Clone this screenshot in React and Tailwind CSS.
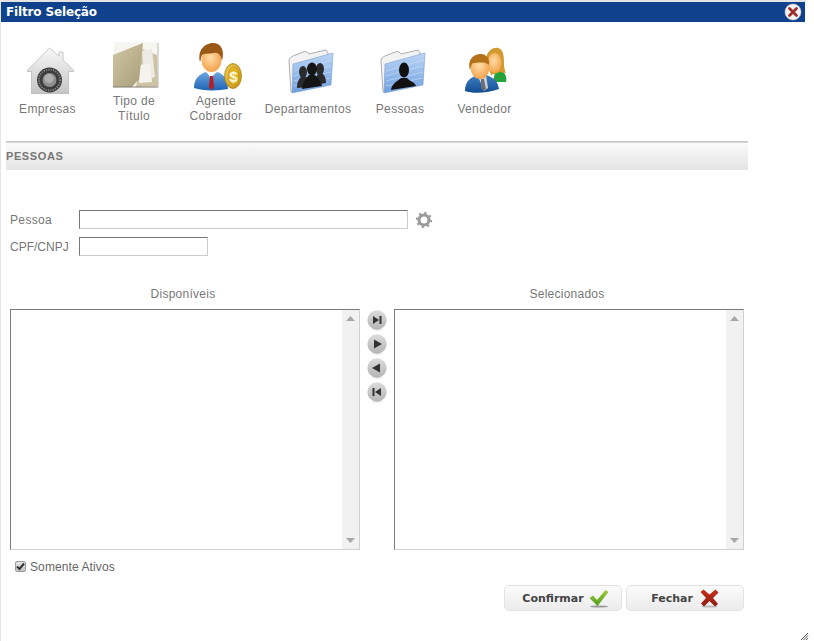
import React from "react";

function Defs() {
  return (
    <svg width="0" height="0" className="absolute">
      <defs>
        <linearGradient id="silver" x1="0" y1="0" x2="0" y2="1"><stop offset="0" stopColor="#f8f8f8" /><stop offset="1" stopColor="#c4c4c4" /></linearGradient>
        <linearGradient id="tan" x1="0" y1="0" x2="1" y2="1"><stop offset="0" stopColor="#d2c7a4" /><stop offset="1" stopColor="#a89d7b" /></linearGradient>
        <linearGradient id="blueF" x1="0" y1="0" x2="0" y2="1"><stop offset="0" stopColor="#bcd6f5" /><stop offset="1" stopColor="#6f9fe0" /></linearGradient>
        <linearGradient id="suit" x1="0" y1="0" x2="0" y2="1"><stop offset="0" stopColor="#6ea6de" /><stop offset="1" stopColor="#1d64b4" /></linearGradient>
        <linearGradient id="suit2" x1="0" y1="0" x2="0" y2="1"><stop offset="0" stopColor="#3f7fc0" /><stop offset="1" stopColor="#134d92" /></linearGradient>
        <radialGradient id="skin" cx="0.45" cy="0.4" r="0.7"><stop offset="0" stopColor="#ffdca8" /><stop offset="1" stopColor="#f09a3c" /></radialGradient>
        <radialGradient id="coin" cx="0.4" cy="0.4" r="0.7"><stop offset="0" stopColor="#fbe26a" /><stop offset="1" stopColor="#c08a0c" /></radialGradient>
        <linearGradient id="rb" x1="0" y1="0" x2="0" y2="1"><stop offset="0" stopColor="#dcdcdc" /><stop offset="1" stopColor="#b4b4b4" /></linearGradient>
        <linearGradient id="grn" x1="0" y1="0" x2="0" y2="1"><stop offset="0" stopColor="#a4cf3c" /><stop offset="1" stopColor="#4c9a1c" /></linearGradient>
        <linearGradient id="red" x1="0" y1="0" x2="0" y2="1"><stop offset="0" stopColor="#c8321e" /><stop offset="1" stopColor="#8e1a10" /></linearGradient>
      </defs>
    </svg>
  );
}

function Ico({ children }) {
  return <svg width="56" height="53" viewBox="0 0 56 53" className="block mx-auto">{children}</svg>;
}

function House() {
  return (
    <Ico>
      <path d="M29.5 7 L39 15 V11 H43 V19 L53.5 29 V30.5 H48.5 V53 H11.5 V30.5 H7.5 V29 Z" fill="url(#silver)" stroke="#b4b4b4" strokeWidth="0.7" />
      <circle cx="29.5" cy="39" r="12.5" fill="#3c3c3c" />
      <circle cx="29.5" cy="39" r="10.5" fill="none" stroke="#8a8a8a" strokeWidth="1.8" strokeDasharray="1.2 1.2" />
      <circle cx="29.5" cy="39" r="7" fill="#8e8e8e" />
      <circle cx="29" cy="37.5" r="4.5" fill="#b0b0b0" />
    </Ico>
  );
}

function TanFolder() {
  return (
    <Ico>
      <rect x="8" y="1" width="44" height="45" fill="#f7f5f0" />
      <path d="M36 8 L51 14 L52 45 L30 46 Z" fill="#cdc3a2" />
      <path d="M36 10 L46 8 L49 36 L38 40 Z" fill="#eceae4" />
      <path d="M34 24 L44 22 L46 41 L33 42 Z" fill="#f4f3ee" />
      <path d="M7 14 L37 2 L35 22 L33 38 L26 46 L7 46 Z" fill="url(#tan)" />
      <path d="M7 46 L52 46" stroke="#7e7868" strokeWidth="1" />
      <path d="M52 2 V46" stroke="#bbb" strokeWidth="1" />
    </Ico>
  );
}

function Agent() {
  return (
    <Ico>
      <path d="M6 47 C6 37 12 33 18 31 L23 36 L29 31 C35 33 40 37 40 48 C30 50 14 50 6 47Z" fill="url(#suit)" />
      <path d="M19 31 L23 35 L27 31 L26 33 L23 38 L20 33Z" fill="#fff" />
      <path d="M22 35 H25 L26 46 L23.5 49 L21 46Z" fill="#b81c24" />
      <ellipse cx="23.5" cy="19" rx="10" ry="12" fill="url(#skin)" />
      <path d="M12 21 C9 8 18 2 25 2 C33 2 37 9 34 20 C33 14 30 11 26 12 C21 13 16 12 14 14 C13 16 13 19 12 21Z" fill="#9a5a16" />
      <ellipse cx="45" cy="35" rx="8.5" ry="12.5" fill="url(#coin)" stroke="#a87c10" strokeWidth="0.7" />
      <ellipse cx="45.5" cy="35" rx="5.5" ry="9" fill="#e3b422" stroke="#b48a10" strokeWidth="0.6" />
      <text x="45.5" y="40.5" textAnchor="middle" fontSize="15" fontWeight="700" fill="#fff8e0" fontFamily="Liberation Sans, sans-serif">$</text>
    </Ico>
  );
}

function BlueFolder({ children }) {
  return (
    <Ico>
      <path d="M11 51 L9 20 C9 17 11 16 13 15 L23 11 C25 10 28 11 29 13 L46 9 L48 12 L48 20 L15 50Z" fill="#f3f3f3" stroke="#9a9a9a" strokeWidth="0.8" />
      <path d="M13 23 L53 12 L51 44 L12 52Z" fill="url(#blueF)" stroke="#7c9fd0" strokeWidth="0.6" />
      <path d="M14 30 L52 19 M14 35 L51 25 M14 40 L51 31 M14 45 L50 37" stroke="#d0e2f8" strokeWidth="0.8" opacity="0.7" />
      {children}
    </Ico>
  );
}

function Vendor() {
  return (
    <Ico>
      <path d="M38 31 L46 31 C49 33 50 38 49 41 H36Z" fill="#25a33a" />
      <path d="M29 20 C29 10 36 6 41 7 C47 8 47 17 47 23 C47 27 48 30 49 32 L43 31 L34 34Z" fill="#d49a32" />
      <ellipse cx="37.5" cy="22" rx="7" ry="10" fill="url(#skin)" />
      <path d="M8 50 C8 40 14 36 21 34 L24 36 L29 34 C36 36 41 40 42 48 C32 52 16 53 8 50Z" fill="url(#suit2)" />
      <path d="M20 34 L25 37 L29 34 L31 47 L27 50 L23 40Z" fill="#cfd3d8" />
      <path d="M24 38 H27 L29 48 L27 50 L24 47Z" fill="#6a7078" />
      <ellipse cx="23" cy="27" rx="9.5" ry="11" fill="url(#skin)" />
      <path d="M13 29 C10 18 17 13 24 13 C30 13 33 18 32 24 C28 20 20 22 16 22 C14 23 14 26 13 29Z" fill="#b5701a" />
    </Ico>
  );
}

function ToolItem({ w, children, icon }) {
  return (
    <div className={`${w} shrink-0`}>
      {icon}
      <div className="h-[30px] flex items-center justify-center text-center leading-[15px]">
        <span>{children}</span>
      </div>
    </div>
  );
}

function ScrollBar() {
  return (
    <div className="w-[17px] h-full bg-[#f1f1f1] flex flex-col justify-between items-center py-[6px]">
      <svg width="9" height="5"><path d="M0 5 L4.5 0 L9 5Z" fill="#a8a8a8" /></svg>
      <svg width="9" height="5"><path d="M0 0 L4.5 5 L9 0Z" fill="#a8a8a8" /></svg>
    </div>
  );
}

function ListBox({ title }) {
  return (
    <div className="w-[350px]">
      <div className="h-[30px] flex items-center justify-center tracking-[0.25px] pr-[4px]">{title}</div>
      <div className="h-[241px] border-t border-l border-[#7a7a7a] border-r-[1px] border-r-[#d0d0d0] border-b border-b-[#d0d0d0] bg-white flex justify-end">
        <ScrollBar />
      </div>
    </div>
  );
}

function RoundBtn({ d }) {
  return (
    <svg width="20" height="21" viewBox="0 0 20 21" className="block">
      <ellipse cx="10" cy="19.5" rx="6" ry="1.5" fill="#eee" />
      <circle cx="10" cy="10" r="9.7" fill="url(#rb)" />
      <path d={d} fill="#333" />
    </svg>
  );
}

function ActionBtn({ label, children, cls }) {
  return (
    <div className={`w-[118px] h-[26px] rounded-[5px] border border-[#e2e2e2] bg-gradient-to-b from-[#fbfbfb] to-[#ececec] flex items-center justify-center ${cls} font-bold text-[#444] text-[11px] tracking-normal [font-family:'DejaVu_Sans',sans-serif]`}>
      <span className="mt-[3px]">{label}</span>
      {children}
    </div>
  );
}

export default function App() {
  return (
    <div className="relative w-[814px] h-[641px] bg-white overflow-hidden text-[12px] tracking-[0.35px] text-[#777] [font-family:'Liberation_Sans',Arial,sans-serif]">
      <Defs />
      <div className="w-[806px] h-[641px] border-l border-l-[#e4e4e4] border-t-2 border-t-[#e4e4e4]">
        <div className="w-[804px] h-[20px] bg-[#10418c] flex items-center justify-between pl-[5px] pr-[3px]">
          <span className="text-white font-bold text-[12px] tracking-[-0.15px] [font-family:'DejaVu_Sans',sans-serif]">Filtro Seleção</span>
          <svg width="18" height="18" viewBox="0 0 18 18">
            <circle cx="9" cy="9" r="8" fill="#f4f2f2" stroke="#c8c8d8" strokeWidth="0.6" />
            <path d="M5.5 5.5 L12.5 12.5 M12.5 5.5 L5.5 12.5" stroke="#a02c2c" strokeWidth="2.8" strokeLinecap="round" />
          </svg>
        </div>

        <div className="ml-[5px] w-[742px]">
          <div className="flex pt-[19px] h-[119px]">
            <ToolItem w="w-[83px]" icon={<House />}>Empresas</ToolItem>
            <ToolItem w="w-[90px]" icon={<TanFolder />}>Tipo de<br />Título</ToolItem>
            <ToolItem w="w-[74px]" icon={<Agent />}>Agente<br />Cobrador</ToolItem>
            <ToolItem w="w-[110px]" icon={
              <BlueFolder>
                <ellipse cx="23" cy="31" rx="4" ry="6" fill="#2a2a2a" /><path d="M17 47 C17 41 19 38 21 36 H26 C28 38 29 40 29 46Z" fill="#2a2a2a" />
                <ellipse cx="40" cy="28" rx="4" ry="6" fill="#2a2a2a" /><path d="M35 44 C35 38 36 35 38 33 H43 C45 35 46 38 46 42Z" fill="#2a2a2a" />
                <ellipse cx="32" cy="28" rx="5" ry="6.5" fill="#151515" /><path d="M22 48 C23 40 26 37 29 34 H35 C38 37 41 40 42 45Z" fill="#151515" />
              </BlueFolder>
            }>Departamentos</ToolItem>
            <ToolItem w="w-[74px]" icon={
              <BlueFolder>
                <ellipse cx="32" cy="29" rx="5" ry="7.5" fill="#111" />
                <path d="M19 49 C20 42 26 40 29 37 H35 C37 40 43 41 44 45Z" fill="#111" />
              </BlueFolder>
            }>Pessoas</ToolItem>
            <ToolItem w="w-[95px]" icon={<Vendor />}>Vendedor</ToolItem>
          </div>

          <div className="h-[2px] bg-gradient-to-b from-[#c4c4c4] to-[#d8d8d8]" />
          <div className="h-[27px] bg-gradient-to-b from-[#fafafa] to-[#e4e4e4] flex items-center font-bold text-[#777] text-[11px] tracking-[0.6px]">PESSOAS</div>

          <div className="mt-[40px] pl-[4px]">
            <div className="flex items-center h-[19px]">
              <span className="w-[69px]">Pessoa</span>
              <div className="w-[329px] h-[19px] border border-[#ccc] border-t-[#777] border-l-[#777]" />
              <svg width="18" height="18" viewBox="0 0 18 18" className="ml-[7px]">
                <circle cx="9" cy="9" r="5" fill="none" stroke="#999" strokeWidth="3" />
                <circle cx="9" cy="9" r="7" fill="none" stroke="#a0a0a0" strokeWidth="2.4" strokeDasharray="2.2 3.3" />
              </svg>
            </div>
            <div className="flex items-center h-[19px] mt-[8px]">
              <span className="w-[69px] tracking-normal">CPF/CNPJ</span>
              <div className="w-[129px] h-[19px] border border-[#ccc] border-t-[#777] border-l-[#777]" />
            </div>

            <div className="flex mt-[23px]">
              <ListBox title="Disponíveis" />
              <div className="w-[34px] flex flex-col items-center gap-[3px] pt-[31px]">
                <RoundBtn d="M6 6 L12 10 L6 14Z M12.5 6 H14.5 V14 H12.5Z" />
                <RoundBtn d="M7 5.5 L15 10 L7 14.5Z" />
                <RoundBtn d="M13 5.5 L5 10 L13 14.5Z" />
                <RoundBtn d="M14 6 L8 10 L14 14Z M5.5 6 H7.5 V14 H5.5Z" />
              </div>
              <ListBox title="Selecionados" />
            </div>

            <div className="flex items-center h-[12px] mt-[10px] ml-[5px]">
              <div className="w-[11px] h-[11px] rounded-[2px] border border-[#9a9a9a] bg-gradient-to-b from-[#e8e8e8] to-[#c4c4c4] flex items-center justify-center">
                <svg width="9" height="9" viewBox="0 0 9 9"><path d="M1 4.5 L3.5 7 L8 1.5" fill="none" stroke="#333" strokeWidth="2" /></svg>
              </div>
              <span className="ml-[4px] mt-[2px] tracking-[0.1px] text-[#666]">Somente Ativos</span>
            </div>

            <div className="flex justify-end gap-[4px] mt-[13px] pr-[4px]">
              <ActionBtn label="Confirmar" cls="gap-[5px] pl-[5px]">
                <svg width="20" height="19" viewBox="0 0 20 19">
                  <ellipse cx="10" cy="17.5" rx="9" ry="1" fill="#999" />
                  <path d="M0.5 9 L4 6.5 L8 11 L16.5 1 L19.5 3 L8.5 17Z" fill="url(#grn)" />
                </svg>
              </ActionBtn>
              <ActionBtn label="Fechar" cls="gap-[7px]">
                <svg width="19" height="19" viewBox="0 0 19 19">
                  <ellipse cx="9.5" cy="17.5" rx="8" ry="1" fill="#bbb" />
                  <path d="M0.5 3 L3.5 0.5 L9.5 5.5 L15.5 0.5 L18.5 3.5 L13 9 L18 15 L15 17.5 L9.5 12 L4 17.5 L1 14.5 L6 9Z" fill="url(#red)" />
                </svg>
              </ActionBtn>
            </div>
          </div>
        </div>
      </div>
      <svg width="9" height="9" viewBox="0 0 9 9" className="absolute left-[800px] top-[632px]">
        <path d="M8 1 L1 8 M8 3.5 L3.5 8 M8 6 L6 8" stroke="#555" strokeWidth="1" />
      </svg>
    </div>
  );
}
